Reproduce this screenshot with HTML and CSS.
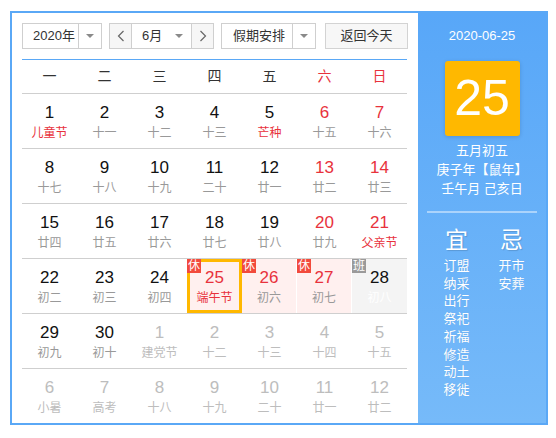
FILE: index.html
```html
<!DOCTYPE html>
<html lang="zh-CN">
<head>
<meta charset="utf-8">
<link rel="stylesheet" href="styles.css">
</head>
<body>
<div class="cal">
  <div class="main">
    <div class="toolbar">
      <div class="sel sel-year"><span class="sel-text">2020年</span><span class="sel-arrow"><i class="tri"></i></span></div>
      <div class="month">
        <span class="nav"><svg width="8" height="12" viewBox="0 0 8 12"><polyline points="6.5,1 1.5,6 6.5,11" fill="none" stroke="#666" stroke-width="1.2"/></svg></span>
        <span class="month-mid"><span class="sel-text">6月</span><i class="tri"></i></span>
        <span class="nav nav-next"><svg width="8" height="12" viewBox="0 0 8 12"><polyline points="1.5,1 6.5,6 1.5,11" fill="none" stroke="#666" stroke-width="1.2"/></svg></span>
      </div>
      <div class="sel sel-hol"><span class="sel-text">假期安排</span><span class="sel-arrow"><i class="tri"></i></span></div>
      <div class="btn">返回今天</div>
    </div>
    <div class="weekhead">
      <span>一</span><span>二</span><span>三</span><span>四</span><span>五</span><span class="red">六</span><span class="red">日</span>
    </div>
    <div class="grid">
      <div class="row">
        <div class="cell"><b>1</b><em class="red">儿童节</em></div>
        <div class="cell"><b>2</b><em>十一</em></div>
        <div class="cell"><b>3</b><em>十二</em></div>
        <div class="cell"><b>4</b><em>十三</em></div>
        <div class="cell"><b>5</b><em class="red">芒种</em></div>
        <div class="cell"><b class="red">6</b><em>十五</em></div>
        <div class="cell"><b class="red">7</b><em>十六</em></div>
      </div>
      <div class="row">
        <div class="cell"><b>8</b><em>十七</em></div>
        <div class="cell"><b>9</b><em>十八</em></div>
        <div class="cell"><b>10</b><em>十九</em></div>
        <div class="cell"><b>11</b><em>二十</em></div>
        <div class="cell"><b>12</b><em>廿一</em></div>
        <div class="cell"><b class="red">13</b><em>廿二</em></div>
        <div class="cell"><b class="red">14</b><em>廿三</em></div>
      </div>
      <div class="row">
        <div class="cell"><b>15</b><em>廿四</em></div>
        <div class="cell"><b>16</b><em>廿五</em></div>
        <div class="cell"><b>17</b><em>廿六</em></div>
        <div class="cell"><b>18</b><em>廿七</em></div>
        <div class="cell"><b>19</b><em>廿八</em></div>
        <div class="cell"><b class="red">20</b><em>廿九</em></div>
        <div class="cell"><b class="red">21</b><em class="red">父亲节</em></div>
      </div>
      <div class="row">
        <div class="cell"><b>22</b><em>初二</em></div>
        <div class="cell"><b>23</b><em>初三</em></div>
        <div class="cell"><b>24</b><em>初四</em></div>
        <div class="cell hol today"><span class="badge">休</span><b class="red">25</b><em class="red">端午节</em></div>
        <div class="cell hol"><span class="badge">休</span><b class="red">26</b><em>初六</em></div>
        <div class="cell hol"><span class="badge">休</span><b class="red">27</b><em>初七</em></div>
        <div class="cell work"><span class="badge badge-work">班</span><b>28</b><em>初八</em></div>
      </div>
      <div class="row">
        <div class="cell"><b>29</b><em>初九</em></div>
        <div class="cell"><b>30</b><em>初十</em></div>
        <div class="cell other"><b>1</b><em>建党节</em></div>
        <div class="cell other"><b>2</b><em>十二</em></div>
        <div class="cell other"><b>3</b><em>十三</em></div>
        <div class="cell other"><b>4</b><em>十四</em></div>
        <div class="cell other"><b>5</b><em>十五</em></div>
      </div>
      <div class="row row-last">
        <div class="cell other"><b>6</b><em>小暑</em></div>
        <div class="cell other"><b>7</b><em>高考</em></div>
        <div class="cell other"><b>8</b><em>十八</em></div>
        <div class="cell other"><b>9</b><em>十九</em></div>
        <div class="cell other"><b>10</b><em>二十</em></div>
        <div class="cell other"><b>11</b><em>廿一</em></div>
        <div class="cell other"><b>12</b><em>廿二</em></div>
      </div>
    </div>
  </div>
  <div class="side">
    <div class="side-date">2020-06-25</div>
    <div class="big-day">25</div>
    <div class="lunar">
      <div>五月初五</div>
      <div>庚子年【鼠年】</div>
      <div>壬午月 己亥日</div>
    </div>
    <div class="divider"></div>
    <div class="yiji">
      <div class="yj-col">
        <div class="yj-title">宜</div>
        <div>订盟</div><div>纳采</div><div>出行</div><div>祭祀</div><div>祈福</div><div>修造</div><div>动土</div><div>移徙</div>
      </div>
      <div class="yj-col">
        <div class="yj-title">忌</div>
        <div>开市</div><div>安葬</div>
      </div>
    </div>
  </div>
</div>
</body>
</html>
```

FILE: styles.css
```css
* { box-sizing: border-box; }
html, body { margin: 0; padding: 0; background: #fff; }
body {
  font-family: "Liberation Sans", "Noto Sans CJK SC", sans-serif;
  color: #222;
}
.cal {
  margin: 11px 0 0 10px;
  width: 538px;
  height: 414px;
  border: 2px solid #5aa8f6;
  display: flex;
}
.main {
  width: 406px;
  padding: 10px 0 0 10px;
}
.toolbar {
  display: flex;
  height: 26px;
  font-size: 13px;
  color: #333;
}
.sel {
  display: flex;
  border: 1px solid #cfcfcf;
  background: #fff;
  height: 26px;
}
.sel-text { line-height: 24px; }
.sel-year { width: 80px; }
.sel-year .sel-text { width: 55px; padding-left: 10px; }
.sel-arrow {
  flex: 1;
  border-left: 1px solid #cfcfcf;
  display: flex;
  align-items: center;
  justify-content: center;
}
.tri {
  display: block;
  width: 0; height: 0;
  border-left: 4px solid transparent;
  border-right: 4px solid transparent;
  border-top: 4px solid #8a8a8a;
}
.month {
  margin-left: 7px;
  width: 105px;
  display: flex;
  border: 1px solid #cfcfcf;
}
.nav {
  width: 22px;
  background: #f6f6f6;
  border-right: 1px solid #cfcfcf;
  display: flex;
  align-items: center;
  justify-content: center;
}
.nav-next { border-right: 0; border-left: 1px solid #cfcfcf; }
.month-mid {
  flex: 1;
  display: flex;
  align-items: center;
  justify-content: space-between;
  padding: 0 8px 0 10px;
}
.sel-hol { margin-left: 7px; width: 95px; }
.sel-hol .sel-text { width: 70px; padding-left: 11px; }
.btn {
  margin-left: 9px;
  width: 83px;
  height: 26px;
  border: 1px solid #d3d3d3;
  background: #f7f7f7;
  text-align: center;
  line-height: 24px;
}
.weekhead {
  margin-top: 10px;
  width: 385px;
  border-top: 1px solid #5aa8f6;
  border-bottom: 1px solid #cfcfcf;
  height: 35px;
  display: flex;
  font-size: 14px;
  color: #333;
}
.weekhead span {
  width: 55px;
  text-align: center;
  line-height: 33px;
}
.red { color: #e8323c !important; }
.grid { width: 385px; }
.row {
  display: flex;
  height: 55px;
  border-bottom: 1px solid #cfcfcf;
}
.row-last { border-bottom: 0; height: 54px; }
.cell {
  position: relative;
  width: 55px;
  text-align: center;
  padding-top: 9px;
}
.cell b {
  display: block;
  font-weight: normal;
  font-size: 17px;
  line-height: 20px;
  color: #111;
}
.cell em {
  display: block;
  font-style: normal;
  font-size: 12px;
  line-height: 16px;
  margin-top: 2px;
  color: #999;
}
.cell.other b, .cell.other em { color: #bdbdbd; }
.cell.hol { background: #fff0ef; border-right: 1px solid #fff; }
.cell.today { box-shadow: inset 0 0 0 3px #ffb800; border-right: 0; }
.cell.work { background: #f4f4f4; }
.cell.work em { color: #fff; }
.badge {
  position: absolute;
  left: 0;
  top: 0;
  width: 14px;
  height: 14px;
  background: #f24a3c;
  color: #fff;
  font-size: 12px;
  line-height: 14px;
  text-align: center;
}
.badge-work { background: #9a9a9a; }
.side {
  width: 128px;
  background: linear-gradient(#58a7f8, #76baf9);
  color: #fff;
  display: flex;
  flex-direction: column;
  align-items: center;
  padding-top: 15px;
}
.side-date {
  font-size: 13px;
  line-height: 16px;
  height: 16px;
}
.big-day {
  margin-top: 17px;
  width: 75px;
  height: 75px;
  border-radius: 3px;
  background: #ffb800;
  box-shadow: 0 1px 4px rgba(0, 0, 0, 0.15);
  font-size: 50px;
  line-height: 75px;
  text-align: center;
}
.lunar {
  margin-top: 5px;
  font-size: 13px;
  line-height: 19px;
  text-align: center;
}
.divider {
  margin-top: 13px;
  width: 110px;
  height: 2px;
  background: rgba(255, 255, 255, 0.45);
}
.yiji {
  display: flex;
  margin-top: 13px;
  margin-left: 4px;
  font-size: 13px;
  line-height: 17.7px;
  text-shadow: 0 0 1px rgba(0, 0, 0, 0.1);
}
.yj-col { width: 55px; text-align: center; }
.yj-title {
  font-size: 23px;
  line-height: 28px;
  margin-bottom: 3px;
  text-shadow: 1px 1px 1px rgba(0, 0, 0, 0.15);
}
```
